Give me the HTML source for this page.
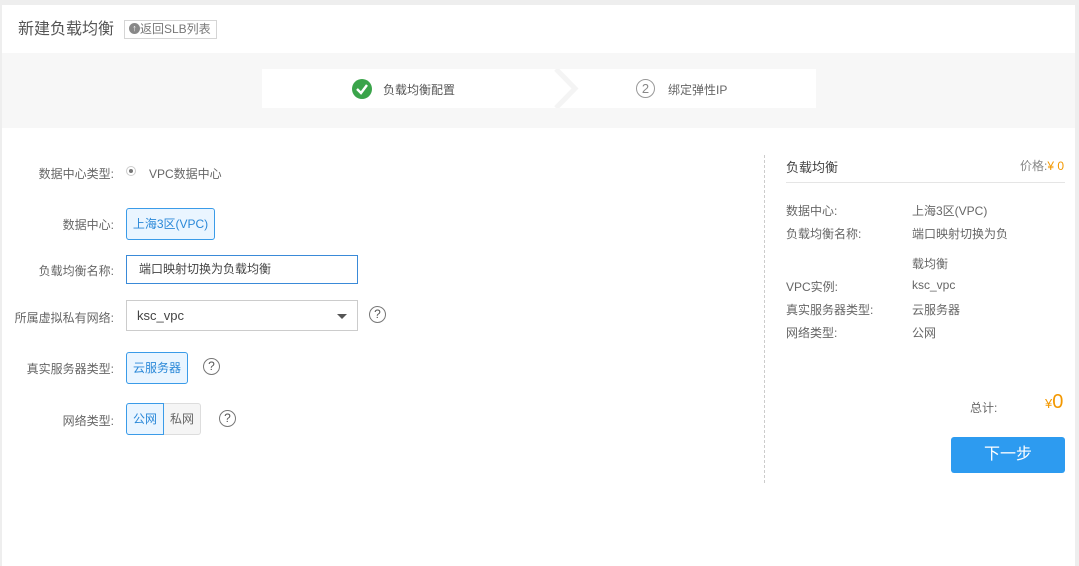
<!DOCTYPE html>
<html><head><meta charset="utf-8"><style>
*{box-sizing:border-box;margin:0;padding:0}
body{width:1079px;height:566px;background:#eeeeee;font-family:"Liberation Sans","Noto Sans CJK SC",sans-serif;font-size:12px;color:#666;position:relative;overflow:hidden}
.card{position:absolute;left:2px;top:5px;width:1073px;height:561px;background:#fff}
.abs{position:absolute}
.band{position:absolute;left:0;top:48px;width:1073px;height:75px;background:#f7f7f7}
.lbl{position:absolute;width:112px;text-align:right;color:#666;font-size:12px}
.btn{position:absolute;height:32px;border:1px solid #3a9be8;background:#eaf5ff;color:#2a88d8;border-radius:3px;line-height:30px;text-align:center;font-size:12px}
.q{position:absolute;width:17px;height:17px;border:1px solid #777;border-radius:50%;text-align:center;line-height:15px;font-size:12px;color:#555}
.r{position:absolute;font-size:12px;color:#666}
</style></head><body>
<div class="card">
 <div class="abs" style="left:16px;top:10px;font-size:16px;color:#555">新建负载均衡</div>
 <div class="abs" style="left:122px;top:15px;width:93px;height:19px;border:1px solid #d5d5d5;font-size:12px;color:#777;line-height:17px;padding-left:4px;white-space:nowrap">
  <span style="display:inline-block;width:11px;height:11px;border-radius:50%;background:#888;color:#fff;font-size:9px;line-height:11px;text-align:center;vertical-align:middle;margin-top:-2px">↑</span>返回SLB列表</div>
 <div class="band">
  <div class="abs" style="left:260px;top:16px;width:554px;height:39px;background:#fff"></div>
  <svg class="abs" style="left:540px;top:16px" width="40" height="39"><polyline points="14,0 33,19.5 14,39" fill="none" stroke="#f4f4f4" stroke-width="5"/></svg>
  <svg class="abs" style="left:350px;top:26px" width="20" height="20"><circle cx="10" cy="10" r="10" fill="#3aa44a"/><polyline points="5,10 9,14 15,6" fill="none" stroke="#fff" stroke-width="2.4"/></svg>
  <div class="abs" style="left:381px;top:28px;color:#555">负载均衡配置</div>
  <div class="abs" style="left:634px;top:26px;width:19px;height:19px;border:1px solid #999;border-radius:50%;text-align:center;line-height:17px;color:#888;font-size:13px">2</div>
  <div class="abs" style="left:666px;top:28px;color:#666">绑定弹性IP</div>
 </div>
 <div class="lbl" style="left:0;top:160px">数据中心类型:</div>
 <div class="abs" style="left:124px;top:161px;width:10px;height:10px;border:1px solid #ccc;border-radius:50%;background:#fff"><div style="width:4px;height:4px;background:#777;border-radius:50%;margin:2px"></div></div>
 <div class="abs" style="left:147px;top:160px;color:#666">VPC数据中心</div>
 <div class="lbl" style="left:0;top:211px">数据中心:</div>
 <div class="btn" style="left:124px;top:203px;width:89px">上海3区(VPC)</div>
 <div class="lbl" style="left:0;top:257px">负载均衡名称:</div>
 <div class="abs" style="left:124px;top:250px;width:232px;height:29px;border:1px solid #3a8ad8;padding-left:12px;line-height:27px;color:#444">端口映射切换为负载均衡</div>
 <div class="lbl" style="left:0;top:304px">所属虚拟私有网络:</div>
 <div class="abs" style="left:124px;top:295px;width:232px;height:31px;border:1px solid #ccc;padding-left:10px;line-height:29px;color:#444;font-size:13px">ksc_vpc<span style="position:absolute;right:10px;top:13px;border-left:5px solid transparent;border-right:5px solid transparent;border-top:5px solid #555"></span></div>
 <div class="q" style="left:367px;top:301px">?</div>
 <div class="lbl" style="left:0;top:355px">真实服务器类型:</div>
 <div class="btn" style="left:124px;top:347px;width:62px">云服务器</div>
 <div class="q" style="left:201px;top:353px">?</div>
 <div class="lbl" style="left:0;top:407px">网络类型:</div>
 <div class="btn" style="left:124px;top:398px;width:38px;border-radius:3px 0 0 3px">公网</div>
 <div class="abs" style="left:162px;top:398px;width:37px;height:32px;border:1px solid #ddd;border-left:none;background:#f5f5f5;line-height:30px;text-align:center;color:#666;border-radius:0 3px 3px 0">私网</div>
 <div class="q" style="left:217px;top:405px">?</div>

 <div class="abs" style="left:762px;top:150px;height:328px;border-left:1px dashed #ccc"></div>
 <div class="abs" style="left:784px;top:152px;font-size:13px;color:#444">负载均衡</div>
 <div class="abs" style="left:1018px;top:152px;color:#888">价格:<span style="color:#f39800">¥ 0</span></div>
 <div class="abs" style="left:784px;top:177px;width:279px;border-top:1px solid #e5e5e5"></div>
 <div class="r" style="left:784px;top:197px">数据中心:</div><div class="r" style="left:910px;top:197px">上海3区(VPC)</div>
 <div class="r" style="left:784px;top:220px">负载均衡名称:</div><div class="r" style="left:910px;top:220px">端口映射切换为负</div>
 <div class="r" style="left:910px;top:250px">载均衡</div>
 <div class="r" style="left:784px;top:273px">VPC实例:</div><div class="r" style="left:910px;top:273px">ksc_vpc</div>
 <div class="r" style="left:784px;top:296px">真实服务器类型:</div><div class="r" style="left:910px;top:296px">云服务器</div>
 <div class="r" style="left:784px;top:319px">网络类型:</div><div class="r" style="left:910px;top:319px">公网</div>
 <div class="r" style="left:968px;top:394px">总计:</div>
 <div class="abs" style="left:1043px;top:386px;color:#f39800;font-size:13px">¥<span style="font-size:20px">0</span></div>
 <div class="abs" style="left:949px;top:432px;width:114px;height:36px;background:#2d9bf0;border-radius:3px;color:#fff;font-size:16px;text-align:center;line-height:36px">下一步</div>
</div>
</body></html>
